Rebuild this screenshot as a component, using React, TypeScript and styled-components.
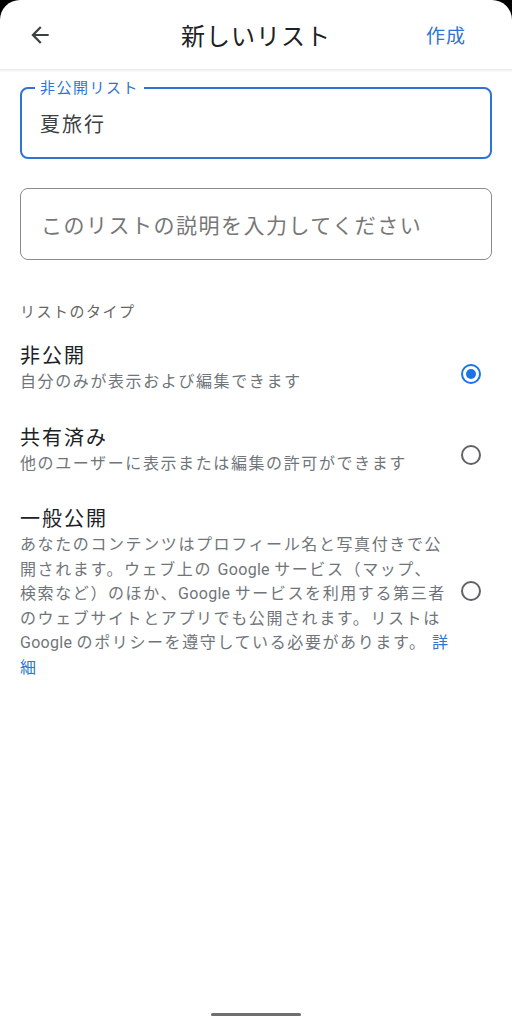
import React, { useState } from 'react';
import styled, { createGlobalStyle } from 'styled-components';

const GlobalStyle = createGlobalStyle`
    html, body {
        margin: 0;
        padding: 0;
        background: #000;
    }
    * {
        box-sizing: border-box;
    }
`;

const Sheet = styled.div`
    min-height: 1024px;
    background: #fff;
    border-radius: 20px 20px 0 0;
    display: flex;
    flex-direction: column;
    font-family: Roboto, 'Noto Sans CJK JP', sans-serif;
    color: #202124;
`;

const Header = styled.header`
    height: 70px;
    display: grid;
    grid-template-columns: 1fr auto 1fr;
    align-items: center;
    box-shadow: 0 1px 2px rgba(0, 0, 0, 0.08);
    border-bottom: 1px solid #ececec;
`;

const BackButton = styled.button`
    justify-self: start;
    margin-left: 27px;
    padding: 0;
    border: none;
    background: none;
    display: flex;
    color: #3c4043;
`;

const Title = styled.h1`
    margin: 0;
    font-size: 24px;
    font-weight: 400;
    letter-spacing: 1px;
    color: #202124;
`;

const CreateButton = styled.button`
    justify-self: end;
    margin-right: 46px;
    padding: 0;
    border: none;
    background: none;
    font-family: inherit;
    font-size: 19px;
    letter-spacing: 1px;
    color: #2f74d0;
`;

const Content = styled.main`
    padding: 0 20px;
`;

const NameField = styled.fieldset`
    margin: 9px 0 0;
    padding: 14px 18px 18px;
    border: 2px solid #2f74d0;
    border-radius: 8px;
`;

const NameLabel = styled.legend`
    margin-left: -5px;
    padding: 0 5px;
    font-size: 15px;
    line-height: 18px;
    letter-spacing: 1.5px;
    color: #2f74d0;
`;

const NameValue = styled.div`
    font-size: 20px;
    line-height: 28px;
    letter-spacing: 2px;
    color: #3c4043;
`;

const DescField = styled.div`
    margin-top: 29px;
    height: 72px;
    border: 1px solid #8a8a8a;
    border-radius: 8px;
    padding: 0 20px;
    display: flex;
    align-items: center;
`;

const Placeholder = styled.span`
    font-size: 21px;
    letter-spacing: 1.5px;
    color: #777;
`;

const SectionLabel = styled.div`
    margin-top: 42px;
    font-size: 15px;
    line-height: 20px;
    letter-spacing: 1.5px;
    color: #666;
`;

const OptionList = styled.div`
    margin-top: 20px;
    display: flex;
    flex-direction: column;
    gap: 29px;
`;

const OptionRow = styled.label`
    display: flex;
    align-items: center;
    justify-content: space-between;
    padding-right: 11px;
    cursor: pointer;
`;

const OptionText = styled.div`
    display: flex;
    flex-direction: column;
`;

const OptionTitle = styled.div`
    font-size: 20px;
    line-height: 28px;
    letter-spacing: 2px;
    color: #202124;
`;

const OptionDesc = styled.div`
    font-size: 16px;
    line-height: 24.5px;
    letter-spacing: 1.6px;
    color: #70757a;
    white-space: nowrap;
`;

const Latin = styled.span`
    letter-spacing: 0.3px;
`;

const Link = styled.span`
    color: #2f74d0;
`;

const Radio = styled.span<{ $checked: boolean; $shift: number }>`
    flex: none;
    width: 20px;
    height: 20px;
    margin-top: ${(p) => p.$shift}px;
    border-radius: 50%;
    border: 2px solid ${(p) => (p.$checked ? '#1a73e8' : '#5f6368')};
    display: flex;
    align-items: center;
    justify-content: center;

    &::after {
        content: '';
        width: 10px;
        height: 10px;
        border-radius: 50%;
        background: ${(p) => (p.$checked ? '#1a73e8' : 'transparent')};
    }
`;

const Spacer = styled.div`
    flex: 1;
`;

const NavHandle = styled.div`
    align-self: center;
    width: 90px;
    height: 3px;
    border-radius: 2px;
    background: #6f6f6f;
    margin-bottom: 8px;
`;

const options = [
    { id: 'private', title: '非公開', shift: 12 },
    { id: 'shared', title: '共有済み', shift: 10 },
    { id: 'public', title: '一般公開', shift: -4 },
];

const App = () => {
    const [selected, setSelected] = useState('private');

    const renderDesc = (id: string) => {
        if (id === 'private') return <OptionDesc>自分のみが表示および編集できます</OptionDesc>;
        if (id === 'shared')
            return <OptionDesc>他のユーザーに表示または編集の許可ができます</OptionDesc>;
        return (
            <OptionDesc>
                あなたのコンテンツはプロフィール名と写真付きで公
                <br />
                開されます。ウェブ上の <Latin>Google </Latin>サービス（マップ、
                <br />
                検索など）のほか、<Latin>Google </Latin>サービスを利用する第三者
                <br />
                のウェブサイトとアプリでも公開されます。リストは
                <br />
                <Latin>Google </Latin>のポリシーを遵守している必要があります。{' '}
                <Link>
                    詳
                    <br />細
                </Link>
            </OptionDesc>
        );
    };

    return (
        <Sheet>
            <GlobalStyle />
            <Header>
                <BackButton aria-label="戻る">
                    <svg width="26" height="26" viewBox="0 0 24 24">
                        <path
                            d="M20 11H7.83l5.59-5.59L12 4l-8 8 8 8 1.41-1.41L7.83 13H20v-2z"
                            fill="currentColor"
                        />
                    </svg>
                </BackButton>
                <Title>新しいリスト</Title>
                <CreateButton>作成</CreateButton>
            </Header>
            <Content>
                <NameField>
                    <NameLabel>非公開リスト</NameLabel>
                    <NameValue>夏旅行</NameValue>
                </NameField>
                <DescField>
                    <Placeholder>このリストの説明を入力してください</Placeholder>
                </DescField>
                <SectionLabel>リストのタイプ</SectionLabel>
                <OptionList>
                    {options.map((o) => (
                        <OptionRow key={o.id} onClick={() => setSelected(o.id)}>
                            <OptionText>
                                <OptionTitle>{o.title}</OptionTitle>
                                {renderDesc(o.id)}
                            </OptionText>
                            <Radio $checked={selected === o.id} $shift={o.shift} />
                        </OptionRow>
                    ))}
                </OptionList>
            </Content>
            <Spacer />
            <NavHandle />
        </Sheet>
    );
};

export default App;
